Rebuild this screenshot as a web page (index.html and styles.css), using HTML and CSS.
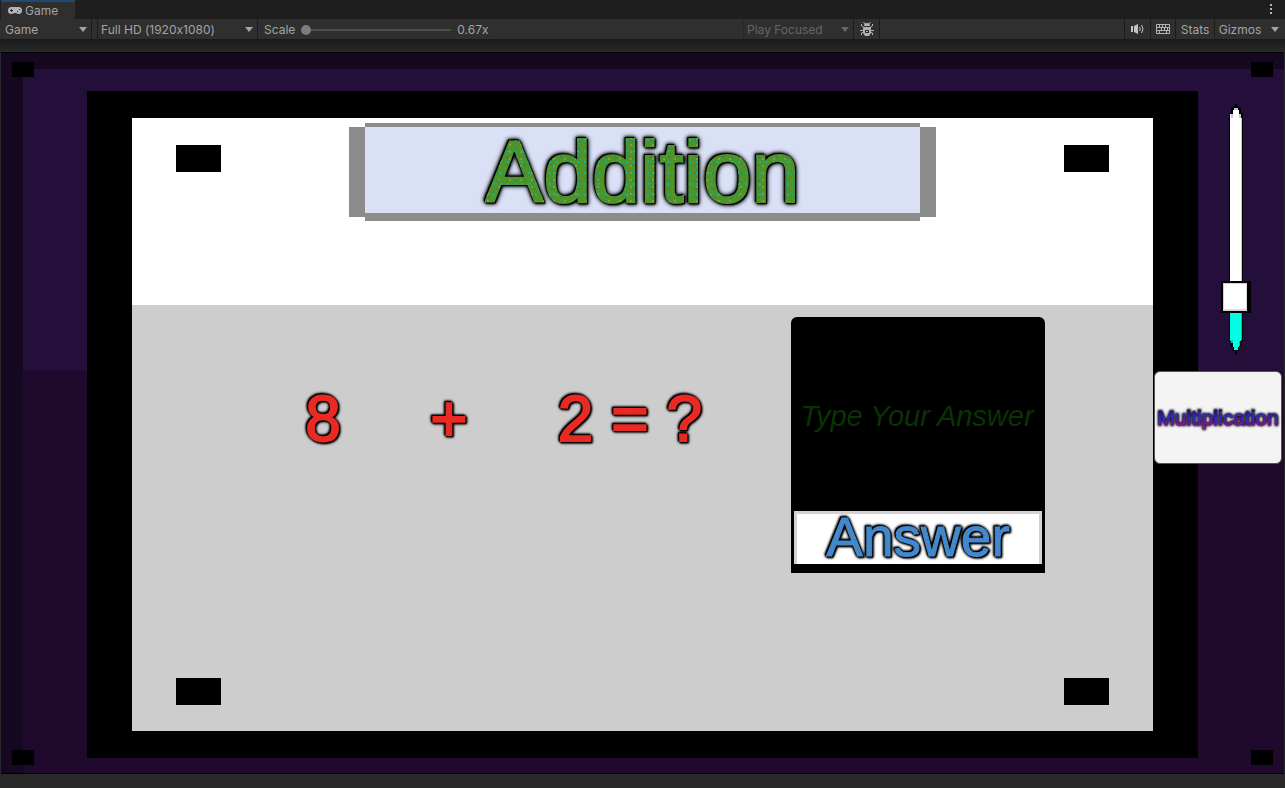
FILE: index.html
```html
<!DOCTYPE html>
<html lang="en">
<head>
  <meta charset="UTF-8">
  <meta name="viewport" content="width=device-width, initial-scale=1.0">
  <title>Game</title>
  <link rel="stylesheet" href="styles.css">
</head>
<body>
  <header class="tabs">
    <button class="tab" type="button">
      <svg class="pad-icon" width="14" height="8" viewBox="0 0 14 8">
        <path fill="#b4b4b4" fill-rule="evenodd" d="M3.500 0h7a3.500 3.500 0 0 1 3.500 3.500a3.500 3.500 0 0 1-3.500 3.500c-1.200 0-1.800-1-3-1h-1c-1.200 0-1.800 1-3 1A3.500 3.500 0 0 1 0 3.500A3.500 3.500 0 0 1 3.500 0zM3 2v1H2v1h1v1h1V4h1V3H4V2zM9 4v1h1V4zM11 2v1h1V2z"/>
      </svg>
      Game
    </button>
    <button class="more" type="button" aria-label="More">
      <svg width="4" height="11" viewBox="0 0 4 11" fill="#b4b4b4"><path d="M1 0h2v2H1zM1 4h2v2H1zM1 8h2v2H1z"/></svg>
    </button>
  </header>

  <nav class="toolbar">
    <div class="drop drop-view">
      <select aria-label="View"><option>Game</option></select>
    </div>
    <div class="drop drop-size">
      <select aria-label="Resolution"><option>Full HD (1920x1080)</option></select>
    </div>
    <div class="scale">
      <label for="scale">Scale</label>
      <input type="range" id="scale" min="0" max="100" value="0">
      <output for="scale">0.67x</output>
    </div>
    <div class="drop drop-focus">
      <select aria-label="Play mode" disabled><option>Play Focused</option></select>
    </div>
    <button class="tool tool-bug" type="button" aria-label="Debug">
      <svg width="14" height="14" viewBox="0 0 14 14">
        <path fill="none" stroke="#b0b0b0" d="M3.500 0l1.500 2M10.500 0l-1.500 2M1.500 2v2L4 5.500M12.500 2v2L10 5.500M0 8.500h3M14 8.500h-3M1.500 13v-2l2-1M12.500 13v-2l-2-1"/>
        <path fill="#b0b0b0" fill-rule="evenodd" d="M4 4a3 3 0 0 1 6 0zM3 5h8v6L9 14H5l-2-3zM5 8v3h4V8zM6 9h2v1H6z"/>
      </svg>
    </button>
    <button class="tool tool-audio" type="button" aria-label="Mute audio">
      <svg width="13" height="10" viewBox="0 0 13 10">
        <path fill="#c4c4c4" d="M0 2h2v6H0zM3 2l4-2v10L3 8z"/>
        <path fill="none" stroke="#c4c4c4" d="M8.500 3q1.500 2 0 4M10.500 1q3 4 0 8"/>
      </svg>
    </button>
    <button class="tool tool-keys" type="button" aria-label="Shortcuts">
      <svg width="14" height="10" viewBox="0 0 14 10">
        <path fill="none" stroke="#b4b4b4" d="M.5.5h13v9H.5zM0 3.500h14M0 6.500h14M3.500 0v3M6.500 0v3M9.500 0v3M5.500 3v3M8.500 3v3M11.500 3v3M3.500 6v4M10.500 6v4"/>
      </svg>
    </button>
    <button class="tool tool-stats" type="button">Stats</button>
    <button class="tool tool-gizmos" type="button">Gizmos</button>
    <button class="tool tool-arrow" type="button" aria-label="Gizmos menu"></button>
  </nav>

  <main class="stage">
    <div class="game">
      <i class="block block-tl"></i>
      <i class="block block-tr"></i>
      <i class="block block-bl"></i>
      <i class="block block-br"></i>

      <section class="board">
        <div class="board-top">
          <i class="peg"></i>
          <h1 class="banner"><span class="title">Addition</span></h1>
          <i class="peg"></i>
        </div>
        <div class="board-main">
          <div class="quiz">
            <p class="problem">
              <span>8</span>
              <span>+</span>
              <span>2 = ?</span>
            </p>
            <form class="answer">
              <input class="answer-input" type="text" placeholder="Type Your Answer" aria-label="Your answer">
              <button class="answer-btn" type="button"><span>Answer</span></button>
            </form>
          </div>
          <div class="pegs">
            <i class="peg"></i>
            <i class="peg"></i>
          </div>
        </div>
      </section>

      <aside class="side">
        <div class="volume">
          <svg width="16" height="250" viewBox="0 0 16 250" shape-rendering="crispEdges">
            <path d="M7 0h2v2h2v2h2v5h2v229h-2v5h-2v4H9v3H7v-3H5v-4H3v-5H1V9h2V4h2V2h2z"/>
            <path fill="#fff" d="M5 6h6v4h2v171H2V10h3z"/>
            <path fill="#c8c8c8" d="M6 4h4v2H6zM3 10h2v4H3zM11 10h2v4h-2zM13 14h1v167h-1z"/>
            <path fill="#00ffe5" d="M2 200h11v37h-2v6h-1v3H6v-3H5v-6H2z"/>
            <path fill="#00c4b4" d="M13 200h1v36h-1zM11 237h1v5h-1zM3 236h2v3H3z"/>
          </svg>
          <input type="range" min="0" max="100" value="19" aria-label="Volume">
        </div>
        <button class="next" type="button"><span>Multiplication</span></button>
      </aside>
    </div>
  </main>
</body>
</html>
```

FILE: styles.css
```css
* { margin: 0; padding: 0; box-sizing: border-box; }

body {
  display: flex;
  flex-direction: column;
  min-height: 100vh;
  background: #1e1e1e;
  color: #a4a4a4;
  font-family: Inter, sans-serif;
  font-size: 12px;
  font-feature-settings: "calt" 0;
}

button, select, input {
  border: none;
  border-radius: 0;
  background: none;
  color: inherit;
  font: inherit;
  font-feature-settings: inherit;
}

/* editor tab + toolbar */
.tabs {
  display: flex;
  justify-content: space-between;
  height: 19px;
  padding-left: 1px;
}
.tab {
  display: flex;
  align-items: center;
  gap: 3px;
  width: 74px;
  padding-left: 7px;
  border-top: 2px solid #1f4a72;
  background: #2f2f2f;
}
.more { width: 28px; padding-top: 2px; }

.toolbar {
  display: flex;
  height: 21px;
  padding-left: 1px;
  border-bottom: 1px solid #1a1a1a;
  background: #2f2f2f;
}
.drop {
  position: relative;
  border-right: 1px solid #1c1c1c;
}
.drop select {
  appearance: none;
  width: 100%;
  height: 21px;
  padding-left: 4px;
}
.drop::after,
.tool-arrow::after {
  content: '';
  border: 4px solid transparent;
  border-top: 5px solid #a4a4a4;
  border-bottom: none;
}
.drop::after {
  position: absolute;
  top: 8px;
  right: 4px;
  pointer-events: none;
}
.drop-view { width: 91px; }
.drop-size {
  width: 161px;
  margin-left: 5px;
  border-left: 1px solid #1c1c1c;
}
.drop-size select { padding-left: 3px; }
.drop-focus {
  width: 111px;
  border-left: 1px solid #262626;
  color: #666;
}
.drop-focus select { opacity: 1; padding-left: 3px; }
.drop-focus::after { border-top-color: #666; }

.scale {
  display: flex;
  flex: 1;
  align-items: center;
  gap: 6px;
  padding: 1px 0 0 6px;
}
.scale input {
  appearance: none;
  width: 150px;
  height: 10px;
  background: linear-gradient(#4d4d4d, #4d4d4d) center / 100% 2px no-repeat;
}
.scale input::-webkit-slider-thumb {
  appearance: none;
  width: 10px;
  height: 10px;
  border-radius: 50%;
  background: #7c7c7c;
}

.tool {
  display: flex;
  align-items: center;
  justify-content: center;
  border-left: 1px solid #1c1c1c;
}
.tool-bug {
  width: 26px;
  margin-right: 244px;
  border-left: none;
  border-right: 1px solid #1c1c1c;
}
.tool-audio { width: 26px; }
.tool-keys { width: 25px; }
.tool-stats { width: 39px; }
.tool-gizmos { width: 51px; }
.tool-arrow { width: 20px; border-left: none; }

/* game view */
.stage {
  display: flex;
  flex: 1;
  padding: 12px 1px 14px;
  background: linear-gradient(#1c1c1c, #2a2a2a 12px, #282828);
}
.game {
  position: relative;
  display: flex;
  flex: 1;
  padding: 38px 0 15px 86px;
  border: 1px solid #000;
  border-width: 1px 0;
  background:
    linear-gradient(#240e3a 302px, #1f0a2e 302px) 22px 16px no-repeat,
    #170821;
}
.block {
  position: absolute;
  width: 22px;
  height: 15px;
  background: #000;
}
.block-tl { top: 9px; left: 11px; }
.block-tr { top: 9px; right: 11px; }
.block-bl { bottom: 8px; left: 11px; }
.block-br { bottom: 8px; right: 11px; }

.board {
  display: flex;
  flex: 1;
  flex-direction: column;
  padding: 27px 45px;
  background: #000;
  font-family: "Liberation Sans", Arial, sans-serif;
}
.board-top {
  display: flex;
  justify-content: space-between;
  align-items: flex-start;
  height: 187px;
  padding: 5px 44px;
  background: #fff;
}
.peg {
  width: 45px;
  height: 27px;
  background: #000;
}
.board-top .peg { margin-top: 22px; }

.banner {
  width: 63%;
  height: 98px;
  padding: 4px 16px 8px;
  background:
    linear-gradient(#dae0f6, #dae0f6) content-box,
    linear-gradient(90deg, transparent 16px, #8c8c8c 16px calc(100% - 16px), transparent 0),
    linear-gradient(#8c8c8c, #8c8c8c) 0 4px / 100% 90px no-repeat;
  font-size: 87px;
  font-weight: normal;
  line-height: 90px;
  text-align: center;
}

/* speckled letters with a dark outline */
.title, .problem span, .answer-btn span, .next span {
  display: inline-block;
  -webkit-background-clip: text;
  background-clip: text;
  color: transparent;
}
.title {
  background-color: #4f932b;
  background-image:
    radial-gradient(circle at 2px 2px, #00b9a8 1px, transparent 1px),
    radial-gradient(circle at 4px 6px, #2a8a66 1px, transparent 1px),
    radial-gradient(circle at 3px 4px, #8a9a3c 1px, transparent 1px);
  background-size: 7px 11px, 9px 8px, 11px 7px;
  -webkit-text-stroke: 2px transparent;
  filter:
    drop-shadow(1px 1px 0 #000) drop-shadow(-1px -1px 0 #000)
    drop-shadow(0 0 1px #000) drop-shadow(0 0 2px #000);
}

.board-main {
  display: flex;
  flex: 1;
  flex-direction: column;
  justify-content: space-between;
  padding: 12px 44px 26px;
  background: #cdcdcd;
}
.quiz {
  display: flex;
  padding-right: 64px;
}
.problem {
  display: grid;
  flex: 1;
  grid-template-columns: 8fr 8fr 15fr;
  align-content: start;
  justify-items: center;
  padding: 64px 43px 0 84px;
  font-size: 64px;
  line-height: 76px;
}
.problem span {
  background-color: #f5221d;
  background-image: radial-gradient(circle at 1px 1px, #d8322a 1px, transparent 1px);
  background-size: 3px 3px;
  -webkit-text-stroke: 2px transparent;
  filter:
    drop-shadow(1px 1px 0 #000) drop-shadow(-1px -1px 0 #000)
    drop-shadow(0 0 1px #000) drop-shadow(0 0 1px #000);
}

.answer {
  display: flex;
  flex-direction: column;
  width: 254px;
  height: 256px;
  padding: 0 3px 9px;
  border-radius: 6px 6px 0 0;
  background: #000;
}
.answer-input {
  flex: 1;
  width: 100%;
  padding: 4px 2px 0 0;
  color: #1b7d10;
  font: italic 29px "Liberation Sans", Arial, sans-serif;
  text-align: center;
  outline: none;
}
.answer-input::placeholder { color: #0a3304; }
.answer-btn {
  height: 53px;
  border: 3px solid #d5d0d3;
  border-bottom: none;
  background: #fff;
  font: 55px/46px "Liberation Sans", Arial, sans-serif;
}
.answer-btn span {
  padding-bottom: 4px;
  background-color: #3a8bdc;
  background-image: radial-gradient(circle at 1px 2px, #5c7f9c 1px, transparent 1px);
  background-size: 4px 4px;
  -webkit-text-stroke: 1px transparent;
  filter:
    drop-shadow(1px 1px 0 #000) drop-shadow(-1px -1px 0 #000)
    drop-shadow(0 0 1px #000) drop-shadow(0 0 1px #000);
}
.pegs {
  display: flex;
  justify-content: space-between;
}

.side {
  display: flex;
  flex-direction: column;
  align-items: center;
  width: 86px;
  padding-top: 13px;
}
.volume {
  display: grid;
  justify-items: center;
  margin-right: 11px;
}
.volume svg, .volume input { grid-area: 1 / 1; }
.volume input {
  appearance: none;
  width: 30px;
  height: 250px;
  writing-mode: vertical-lr;
  direction: rtl;
}
.volume input::-webkit-slider-thumb {
  appearance: none;
  width: 30px;
  height: 32px;
  border: 2px solid #000;
  border-right-width: 4px;
  background: #fff;
  box-shadow: inset -1px -2px #d8d8d8, inset 1px 1px #d8d0d8;
}
.next {
  position: relative;
  align-self: flex-end;
  width: 128px;
  height: 93px;
  margin: 17px 2px 0 0;
  border: 1px solid #555;
  border-radius: 6px;
  background: #f4f4f4;
  font: 21px "Liberation Sans", Arial, sans-serif;
}
.next span {
  background-image: linear-gradient(165deg, #2a1280 20%, #2b30b8 45%, #5a1a98 60%, #901890 90%);
  background-size: 28px 100%;
  -webkit-text-stroke: 1px transparent;
  filter: drop-shadow(0 0 1px #000) drop-shadow(0 0 1px #333);
}
```
